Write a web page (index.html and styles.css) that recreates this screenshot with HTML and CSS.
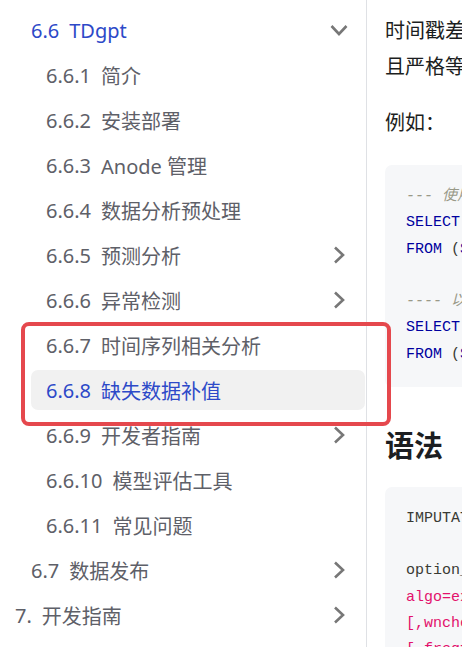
FILE: index.html
```html
<!DOCTYPE html>
<html lang="zh-CN">
<head>
<meta charset="utf-8">
<title>缺失数据补值</title>
<link rel="stylesheet" href="styles.css">
</head>
<body>
<div class="layout">
  <nav class="sidebar">
    <ul class="menu">
      <li class="item lvl2 current"><span class="num">6.6</span><span class="label">TDgpt</span>
        <svg class="chev down" viewBox="0 0 24 24"><polyline points="8,4.5 16,12 8,19.5"/></svg></li>
      <li class="item lvl3"><span class="num">6.6.1</span><span class="label">简介</span></li>
      <li class="item lvl3"><span class="num">6.6.2</span><span class="label">安装部署</span></li>
      <li class="item lvl3"><span class="num">6.6.3</span><span class="label">Anode 管理</span></li>
      <li class="item lvl3"><span class="num">6.6.4</span><span class="label">数据分析预处理</span></li>
      <li class="item lvl3"><span class="num">6.6.5</span><span class="label">预测分析</span>
        <svg class="chev" viewBox="0 0 24 24"><polyline points="8,4.5 16,12 8,19.5"/></svg></li>
      <li class="item lvl3"><span class="num">6.6.6</span><span class="label">异常检测</span>
        <svg class="chev" viewBox="0 0 24 24"><polyline points="8,4.5 16,12 8,19.5"/></svg></li>
      <li class="item lvl3"><span class="num">6.6.7</span><span class="label">时间序列相关分析</span></li>
      <li class="item lvl3 active"><span class="num">6.6.8</span><span class="label">缺失数据补值</span></li>
      <li class="item lvl3"><span class="num">6.6.9</span><span class="label">开发者指南</span>
        <svg class="chev" viewBox="0 0 24 24"><polyline points="8,4.5 16,12 8,19.5"/></svg></li>
      <li class="item lvl3"><span class="num">6.6.10</span><span class="label">模型评估工具</span></li>
      <li class="item lvl3"><span class="num">6.6.11</span><span class="label">常见问题</span></li>
      <li class="item lvl2"><span class="num">6.7</span><span class="label">数据发布</span>
        <svg class="chev" viewBox="0 0 24 24"><polyline points="8,4.5 16,12 8,19.5"/></svg></li>
      <li class="item lvl1"><span class="num">7.</span><span class="label">开发指南</span>
        <svg class="chev" viewBox="0 0 24 24"><polyline points="8,4.5 16,12 8,19.5"/></svg></li>
    </ul>
    <div class="highlight-box"></div>
  </nav>
  <main class="content">
    <p class="para">时间戳差值应当是固定的时间间隔，缺失数据补值要求输入数据按照时间戳升序排列，且严格等间隔分布，否则将无法进行补值处理。</p>
    <p class="para">例如：</p>
    <pre class="code"><span class="cm">--- 使用默认参数进行缺失数据补值</span>
<span class="kw">SELECT</span> _frowts, imputation(val)
<span class="kw">FROM</span> (<span class="kw">SELECT</span> ts, val <span class="kw">FROM</span> foo);

<span class="cm">---- 以 1 秒为时间间隔进行补值</span>
<span class="kw">SELECT</span> _frowts, imputation(val, <span class="str">'freq=1s'</span>)
<span class="kw">FROM</span> (<span class="kw">SELECT</span> ts, val <span class="kw">FROM</span> foo);</pre>
    <h2 class="heading">语法</h2>
    <pre class="code">IMPUTATION(column_expr, option_expr)

option_expr: {<span class="str">"</span>
<span class="str">algo=expr1</span>
<span class="str">[,wncheck=1|0]</span>
<span class="str">[,freq=timeunit]</span>
<span class="str">"</span>}</pre>
  </main>
</div>
</body>
</html>
```
FILE: styles.css
```css
html, body {
  margin: 0;
  padding: 0;
  background: #ffffff;
}
body {
  width: 462px;
  height: 647px;
  overflow: hidden;
  font-family: "Noto Sans", "Noto Sans CJK SC", sans-serif;
}
.layout {
  display: flex;
  height: 647px;
}
.sidebar {
  position: relative;
  flex: none;
  width: 366px;
  border-right: 1px solid #dfe1e5;
  box-sizing: content-box;
}
.menu {
  list-style: none;
  margin: 0;
  padding: 10px 1px 0 0;
  display: flex;
  flex-direction: column;
  gap: 5px;
}
.item {
  display: flex;
  align-items: center;
  height: 40px;
  padding: 0 14px 0 15px;
  gap: 10px;
  font-size: 20px;
  color: #5e6068;
  border-radius: 7px;
  white-space: nowrap;
}
.lvl1 { margin-left: 0; }
.lvl2 { margin-left: 16px; }
.lvl3 { margin-left: 31px; }
.current, .active { color: #2d49c8; }
.active { background: #f1f1f1; }
.chev {
  margin-left: auto;
  width: 24px;
  height: 24px;
  fill: none;
  stroke: #777777;
  stroke-width: 2.6;
  flex: none;
}
.chev.down { transform: rotate(90deg); }
.highlight-box {
  position: absolute;
  left: 21px;
  top: 322px;
  width: 370px;
  height: 104px;
  box-sizing: border-box;
  border: 4px solid #e5484d;
  border-radius: 8px;
  pointer-events: none;
  z-index: 2;
}
.content {
  flex: none;
  width: 760px;
  padding: 13px 0 0 18px;
  color: #1c1e21;
}
.para {
  margin: 0 0 20px;
  font-size: 20px;
  line-height: 36px;
}
.para + .para { margin-bottom: 24px; }
.code {
  margin: 0;
  padding: 19px 21px;
  background: #f6f7f9;
  border-radius: 7px;
  font-family: "Liberation Mono", monospace;
  font-size: 15px;
  line-height: 26.25px;
  color: #393a34;
}
.kw { color: #00009f; }
.str { color: #e3116c; }
.cm { color: #999988; font-style: italic; }
.heading {
  margin: 41px 0 23px;
  font-size: 29px;
  line-height: 36px;
  font-weight: 700;
}
```
